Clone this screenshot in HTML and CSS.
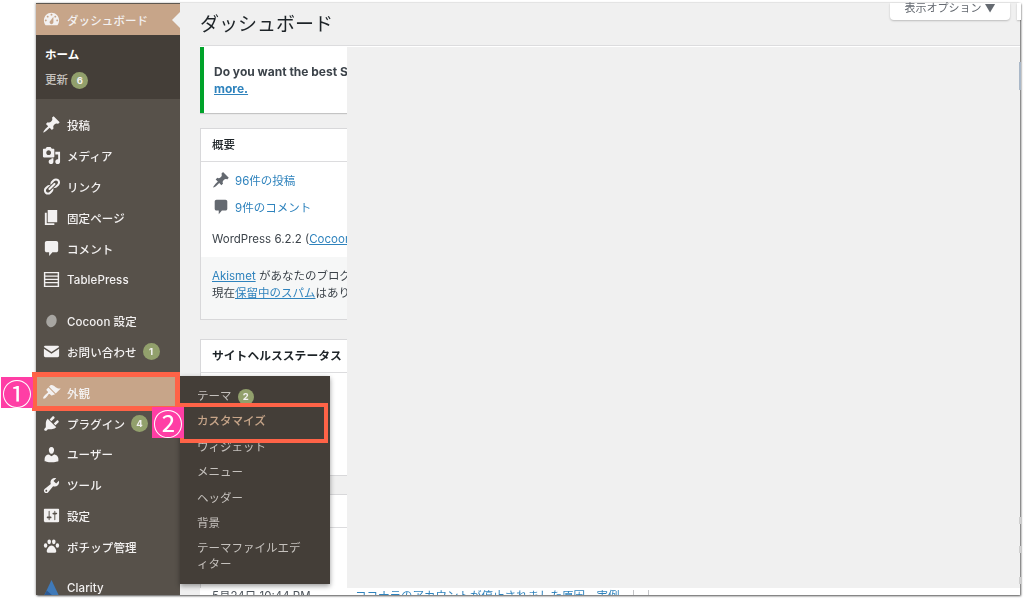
FILE: index.html
```html
<!DOCTYPE html>
<html lang="ja">
<head>
  <meta charset="UTF-8" />
  <title>ダッシュボード</title>
  <link rel="stylesheet" href="styles.css">
</head>
<body>
  <svg class="sprites" width="0" height="0">
    <symbol id="i-pin" viewBox="0 0 20 20"><path d="M10.44 3.02l1.82-1.82 6.36 6.35-1.83 1.82c-1.05-.68-2.48-.57-3.41.36l-.75.75c-.92.93-1.04 2.35-.35 3.41l-1.83 1.82-2.41-2.41-2.8 2.79c-.42.42-3.38 2.71-3.8 2.29s1.86-3.39 2.28-3.81l2.79-2.79L4.1 9.36l1.83-1.82c1.05.69 2.48.57 3.4-.36l.75-.75c.93-.92 1.05-2.35.36-3.41z"/></symbol>
    <symbol id="i-comment" viewBox="0 0 20 20"><path d="M5 2h10c1.1 0 2 .9 2 2v8c0 1.1-.9 2-2 2h-4l-3.5 4v-4H5c-1.1 0-2-.9-2-2V4c0-1.1.9-2 2-2z"/></symbol>
  </svg>

  <div class="frame">
    <nav class="sidebar">
      <div class="menu-item current top">
        <svg class="icon" viewBox="0 0 20 20"><path fill-rule="evenodd" d="M3.76 16h12.48c1.1-1.37 1.76-3.11 1.76-5 0-4.42-3.58-8-8-8s-8 3.58-8 8c0 1.89.66 3.63 1.76 5zM10 4c.55 0 1 .45 1 1s-.45 1-1 1-1-.45-1-1 .45-1 1-1zM6 6c.55 0 1 .45 1 1s-.45 1-1 1-1-.45-1-1 .45-1 1-1zm8 0c.55 0 1 .45 1 1s-.45 1-1 1-1-.45-1-1 .45-1 1-1zm-5.37 5.55L12 7v6c0 1.1-.9 2-2 2s-2-.9-2-2c0-.57.24-1.08.63-1.45zM4 10c.55 0 1 .45 1 1s-.45 1-1 1-1-.45-1-1 .45-1 1-1zm12 0c.55 0 1 .45 1 1s-.45 1-1 1-1-.45-1-1 .45-1 1-1z"/></svg>
        <span>ダッシュボード</span>
      </div>
      <div class="home-sub">
        <div class="home-link strong">ホーム</div>
        <div class="home-link">更新 <span class="badge">6</span></div>
      </div>

      <div class="menu-group">
        <div class="menu-item"><svg class="icon"><use href="#i-pin"/></svg><span>投稿</span></div>
        <div class="menu-item"><svg class="icon" viewBox="0 0 20 20"><path fill-rule="evenodd" d="M13 11V4c0-.55-.45-1-1-1h-1.67L9 1H5L3.67 3H2c-.55 0-1 .45-1 1v7c0 .55.45 1 1 1h10c.55 0 1-.45 1-1zM7 4.5c1.38 0 2.5 1.12 2.5 2.5S8.38 9.5 7 9.5 4.5 8.38 4.5 7 5.62 4.5 7 4.5zM14 6h5v10.5c0 1.38-1.12 2.5-2.5 2.5S14 17.88 14 16.5s1.12-2.5 2.5-2.5c.17 0 .34.02.5.05V9h-3V6zm-4 8.05V13h2v3.5c0 1.38-1.12 2.5-2.5 2.5S7 17.88 7 16.5 8.12 14 9.5 14c.17 0 .34.02.5.05z"/></svg><span>メディア</span></div>
        <div class="menu-item"><svg class="icon" viewBox="0 0 20 20"><path d="M17.74 2.76c1.68 1.69 1.68 4.41 0 6.1l-1.53 1.52c-1.12 1.12-2.7 1.47-4.14 1.09l2.62-2.61.76-.77.76-.76c.84-.84.84-2.2 0-3.04-.84-.85-2.2-.85-3.04 0l-.77.76-3.38 3.38c-.37-1.44-.02-3.02 1.1-4.14l1.52-1.53c1.69-1.68 4.42-1.68 6.1 0zM8.59 13.43l5.34-5.34c.42-.42.42-1.1 0-1.52-.44-.43-1.13-.39-1.53 0l-5.33 5.34c-.42.42-.42 1.1 0 1.52.44.43 1.13.39 1.52 0zm-.76 2.29l4.14-4.15c.38 1.44.03 3.02-1.09 4.14l-1.52 1.53c-1.69 1.68-4.41 1.68-6.1 0-1.68-1.68-1.68-4.42 0-6.1l1.53-1.52c1.12-1.12 2.7-1.47 4.14-1.1l-4.14 4.15c-.85.84-.85 2.2 0 3.05.84.84 2.2.84 3.04 0z"/></svg><span>リンク</span></div>
        <div class="menu-item"><svg class="icon" viewBox="0 0 20 20"><path d="M6 15V2h10v13H6zm-1 1h8v2H3V5h2v11z"/></svg><span>固定ページ</span></div>
        <div class="menu-item"><svg class="icon"><use href="#i-comment"/></svg><span>コメント</span></div>
        <div class="menu-item"><svg class="icon" viewBox="0 0 20 20"><path fill-rule="evenodd" d="M2 2h16v16H2zM3.5 3.5v2.2h13V3.5zM3.5 7v2.2h13V7zM3.5 10.5v2.2h13v-2.2zM3.5 14v2.5h13V14z"/></svg><span>TablePress</span></div>
      </div>

      <div class="menu-group">
        <div class="menu-item"><svg class="icon cocoon" viewBox="0 0 20 20"><ellipse cx="10" cy="10.5" rx="5.4" ry="6.6" transform="rotate(18 10 10.5)"/></svg><span>Cocoon 設定</span></div>
        <div class="menu-item"><svg class="icon" viewBox="0 0 20 20"><path d="M3.5 4h13c.8 0 1.5.7 1.5 1.2L10 10.4 2 5.2C2 4.700 2.700 4 3.500 4zM2 7.200l8 5.200 8-5.200v7.300c0 .8-.7 1.500-1.500 1.500h-13C2.700 16 2 15.300 2 14.500z"/></svg><span>お問い合わせ</span><span class="badge">1</span></div>
      </div>

      <div class="menu-group tight">
        <div class="menu-item current open"><svg class="icon" viewBox="0 0 20 20"><path d="M14.480 11.060L7.410 3.990l1.500-1.500c.5-.56 2.300-.47 3.510.32 1.210.8 1.430 1.280 2.910 2.100 1.180.64 2.450 1.260 4.450.85zm-.71.71L6.700 4.700 4.930 6.470c-.39.39-.39 1.020 0 1.410l1.060 1.060c.39.39.39 1.030 0 1.420-.6.6-6 4.500-4.500 6s4.900-3.900 5.500-4.500c.39-.39 1.030-.39 1.420 0l1.060 1.060c.39.39 1.020.39 1.410 0z"/></svg><span>外観</span></div>
        <div class="menu-item"><svg class="icon" viewBox="0 0 20 20"><path d="M13.110 4.360L9.870 7.600 8 5.730l3.240-3.240c.35-.34 1.050-.2 1.560.32.52.51.66 1.210.31 1.550zm-8 1.770l.91-1.120 9.010 9.010-1.190.84c-.71.71-2.630 1.160-3.820 1.160H6.140L4.900 17.260c-.59.59-1.540.59-2.120 0-.59-.58-.59-1.530 0-2.120l1.240-1.240v-3.880c0-1.130.4-3.190 1.090-3.890zm7.260 3.970l3.240-3.240c.34-.35 1.040-.21 1.550.31.52.51.66 1.210.31 1.550l-3.240 3.250z"/></svg><span>プラグイン</span><span class="badge">4</span></div>
        <div class="menu-item"><svg class="icon" viewBox="0 0 20 20"><path d="M10 9.250c-2.270 0-2.730-3.440-2.730-3.440C7 4.020 7.820 2 9.970 2c2.160 0 2.980 2.020 2.710 3.810 0 0-.41 3.440-2.680 3.440zm0 2.570L12.720 10c2.390 0 4.520 2.330 4.520 4.530v2.490s-3.650 1.130-7.240 1.130c-3.650 0-7.240-1.130-7.240-1.130v-2.490c0-2.250 1.940-4.480 4.470-4.480z"/></svg><span>ユーザー</span></div>
        <div class="menu-item"><svg class="icon" viewBox="0 0 20 20"><path fill-rule="evenodd" d="M16.680 9.770c-1.340 1.340-3.300 1.670-4.950.99l-5.410 6.520c-.99.99-2.590.99-3.580 0s-.99-2.590 0-3.570l6.520-5.420c-.68-1.650-.35-3.610.99-4.950 1.280-1.280 3.120-1.620 4.720-1.060l-2.890 2.890 2.820 2.820 2.860-2.870c.53 1.580.18 3.390-1.080 4.650zM3.810 16.210c.4.39 1.040.39 1.430 0 .4-.4.4-1.040 0-1.430-.39-.4-1.030-.4-1.430 0-.39.39-.39 1.030 0 1.430z"/></svg><span>ツール</span></div>
        <div class="menu-item"><svg class="icon" viewBox="0 0 20 20"><path fill-rule="evenodd" d="M18 16V4c0-.55-.45-1-1-1H3c-.55 0-1 .45-1 1v12c0 .55.45 1 1 1h14c.55 0 1-.45 1-1zM8 11h1c.55 0 1 .45 1 1s-.45 1-1 1H8v1.500c0 .28-.22.5-.5.5s-.5-.22-.5-.5V13H6c-.55 0-1-.45-1-1s.45-1 1-1h1V5.500c0-.28.22-.5.5-.5s.5.22.5.5V11zm5-2h-1c-.55 0-1-.45-1-1s.45-1 1-1h1V5.500c0-.28.22-.5.5-.5s.5.22.5.5V7h1c.55 0 1 .45 1 1s-.45 1-1 1h-1v5.500c0 .28-.22.5-.5.5s-.5-.22-.5-.5V9z"/></svg><span>設定</span></div>
        <div class="menu-item"><svg class="icon" viewBox="0 0 20 20"><ellipse cx="7.600" cy="5" rx="1.900" ry="2.500"/><ellipse cx="12.400" cy="5" rx="1.900" ry="2.500"/><ellipse cx="3.800" cy="9" rx="1.800" ry="2.300"/><ellipse cx="16.200" cy="9" rx="1.800" ry="2.300"/><path d="M10 9c2.500 0 5 3.600 5 6 0 2.400-3 1.500-5 1.500S5 17.400 5 15c0-2.400 2.500-6 5-6z"/></svg><span>ポチップ管理</span></div>
      </div>

      <div class="menu-group">
        <div class="menu-item"><svg class="icon clarity" viewBox="0 0 20 20"><path d="M10 1L19 20H1z" fill="#3f79b8"/><path d="M5 12l9 8H1z" fill="#2d5a94"/></svg><span>Clarity</span></div>
      </div>
    </nav>

    <main class="main">
      <div class="page-head">
        <h1>ダッシュボード</h1>
        <div class="screen-tabs">
          <div class="screen-btn">表示オプション ▼</div>
          <div class="screen-btn next"></div>
        </div>
      </div>

      <div class="notice-line">
        <div class="col">
          <div class="notice">
            <p>Do you want the best SEO plugin</p>
            <a href="#">more.</a>
          </div>

          <section class="card">
            <h2>概要</h2>
            <div class="glance">
              <div class="glance-row"><svg class="glance-icon"><use href="#i-pin"/></svg><a href="#" class="plain">96件の投稿</a></div>
              <div class="glance-row"><svg class="glance-icon"><use href="#i-comment"/></svg><a href="#" class="plain">9件のコメント</a></div>
              <p class="version">WordPress 6.2.2 (<a href="#">Cocoon</a>)</p>
            </div>
            <div class="card-foot">
              <p><a href="#">Akismet</a> があなたのブログを</p>
              <p>現在<a href="#">保留中のスパム</a>はありません</p>
            </div>
          </section>

          <section class="card health">
            <h2>サイトヘルスステータス</h2>
          </section>

          <section class="card activity">
            <h2>&nbsp;</h2>
          </section>
        </div>
      </div>

      <div class="table-strip">
        <span class="date">5月24日 10:44 PM</span>
        <a href="#" class="plain row-link">ココナラのアカウントが停止されました原因、実例</a>
        <span class="cell-edge"></span>
        <span class="cell-edge"></span>
      </div>
    </main>

    <div class="flyout">
      <div class="fly-item">テーマ <span class="badge small">2</span></div>
      <div class="fly-item active">カスタマイズ</div>
      <div class="fly-item">ウィジェット</div>
      <div class="fly-item">メニュー</div>
      <div class="fly-item">ヘッダー</div>
      <div class="fly-item">背景</div>
      <div class="fly-item">テーマファイルエディター</div>
    </div>

    <div class="mark box-one"></div>
    <div class="mark box-two"></div>
    <div class="num num-one">①</div>
    <div class="num num-two">②</div>

    <div class="thumb"></div>
    <div class="tick tick-a"></div>
    <div class="tick tick-b"></div>
    <div class="tick tick-c"></div>
  </div>
</body>
</html>
```

FILE: styles.css
```css
:root {
  --menu-bg: #57514a;
  --sub-bg: #443e38;
  --current: #c7a589;
  --menu-text: #f3f1f1;
  --sub-text: #c5c1bd;
  --badge: #92a06c;
  --link: #2f83bd;
  --page-bg: #f0f0f0;
  --line: #dcdcde;
  --mark: #ff6347;
  --pink: #ff3ea5;
}

* {
  box-sizing: border-box;
}

html, body {
  height: 100%;
}

body {
  margin: 0;
  background-color: #fff;
  overflow: hidden;
  font-family: Inter, "Noto Sans CJK JP", sans-serif;
  font-size: 11.5px;
  color: #3c434a;
}

.sprites {
  position: absolute;
}

a {
  color: var(--link);
}

a.plain {
  text-decoration: none;
}

.frame {
  position: relative;
  display: flex;
  width: 984px;
  height: 592px;
  margin: 3px 0 0 36px;
  background-color: var(--page-bg);
  box-shadow: 1px 1px 2px rgba(0, 0, 0, 0.65), -1px 0 2px rgba(0, 0, 0, 0.2);
  filter: blur(0.45px);
}

/* sidebar */
.sidebar {
  flex: none;
  width: 144px;
  background-color: var(--menu-bg);
  color: var(--menu-text);
  font-weight: 500;
  letter-spacing: 0.1px;
  overflow: hidden;
}

.menu-group {
  margin-top: 10px;
}

.menu-item {
  position: relative;
  display: flex;
  align-items: center;
  gap: 6px;
  height: 31px;
  padding-left: 6px;
  white-space: nowrap;
}

.tight .menu-item {
  height: 30.8px;
}

.menu-item.top {
  height: 32px;
  border-top: 1px solid #5e5850;
}

.menu-item.current {
  background-color: var(--current);
}

.menu-item.top::after,
.menu-item.open::after {
  content: "";
  position: absolute;
  right: 0;
  top: 50%;
  margin-top: -8px;
  border: 8px solid transparent;
  border-right-color: var(--page-bg);
  border-left-width: 0;
}

.menu-item.open::after {
  margin-top: -4px;
  border-width: 4px;
  border-left-width: 0;
  border-right-color: var(--sub-bg);
}

.icon {
  flex: none;
  width: 19px;
  height: 19px;
  fill: var(--menu-text);
}

.icon.cocoon {
  fill: #a8a6a2;
}

.icon.clarity {
  margin-top: 2px;
}

.badge {
  display: inline-block;
  width: 17px;
  height: 17px;
  border-radius: 50%;
  background-color: var(--badge);
  color: #f3f1f1;
  font-size: 9.5px;
  font-weight: 700;
  line-height: 17px;
  text-align: center;
}

.badge.small {
  width: 16px;
  height: 16px;
  margin-left: 3px;
  line-height: 16px;
}

.home-sub {
  height: 64.4px;
  padding: 8px 0 0 9px;
  background-color: var(--sub-bg);
  color: var(--sub-text);
}

.home-link {
  height: 25px;
  line-height: 24px;
}

.home-link.strong {
  color: #fff;
  font-weight: 700;
}

/* main column */
.main {
  flex: 1;
  min-width: 0;
  display: flex;
  flex-direction: column;
  padding-left: 20px;
}

.page-head {
  flex: none;
  display: flex;
  justify-content: space-between;
  height: 42px;
}

h1 {
  margin: 7px 0 0;
  font-size: 19px;
  font-weight: 400;
  line-height: 30px;
  color: #1d2327;
}

.screen-tabs {
  display: flex;
  gap: 7px;
  margin-right: -1px;
}

.screen-btn {
  width: 120px;
  height: 17px;
  background-color: #fff;
  border-radius: 0 0 4px 4px;
  box-shadow: 0 1px 2px rgba(0, 0, 0, 0.22);
  color: #646970;
  font-size: 11px;
  line-height: 10px;
  text-align: center;
}

.screen-btn.next {
  width: 4px;
  border-radius: 0;
}

.notice-line {
  flex: 1;
  min-height: 0;
  border-top: 1px solid var(--line);
  box-shadow: inset 0 1px 0 #fff;
}

.col {
  width: 147px;
  height: 100%;
  padding-top: 1px;
  overflow: hidden;
}

.notice {
  width: 400px;
  height: 66px;
  padding: 16px 0 0 10px;
  background-color: #fff;
  border-left: 4px solid #00a32a;
  box-shadow: 0 1px 1px rgba(0, 0, 0, 0.18);
  font-size: 12px;
  font-weight: 700;
  line-height: 17px;
  white-space: nowrap;
}

.notice p {
  margin: 0;
}

.card {
  width: 400px;
  margin-top: 15px;
  background-color: #fff;
  border: 1px solid #d8d8da;
  white-space: nowrap;
}

.card h2 {
  height: 33px;
  margin: 0;
  padding: 0 11px;
  border-bottom: 1px solid var(--line);
  font-size: 11.5px;
  font-weight: 500;
  line-height: 32px;
  color: #1d2327;
}

.glance {
  height: 95px;
  padding: 4px 0 0 11px;
}

.glance-row {
  display: flex;
  align-items: center;
  gap: 5px;
  height: 27px;
}

.glance-icon {
  flex: none;
  width: 18px;
  height: 18px;
  fill: #646970;
}

.version {
  margin: 9px 0 0;
  line-height: 20px;
}

.card-foot {
  height: 62px;
  padding: 11px 11px 0;
  background-color: #f6f7f7;
  line-height: 17px;
}

.card-foot p {
  margin: 0;
}

.card.health {
  height: 137px;
  margin-top: 19px;
}

.card.health h2 {
  font-size: 11.8px;
  font-weight: 700;
}

.card.activity {
  height: 120px;
  margin-top: 18px;
}

.table-strip {
  flex: none;
  display: flex;
  height: 7px;
  padding-top: 2px;
  overflow: hidden;
  background-color: #fff;
  font-size: 11.5px;
  line-height: 13px;
  white-space: nowrap;
}

.date {
  width: 155px;
  padding-left: 12px;
  color: #50575e;
}

.row-link {
  width: 278px;
}

.cell-edge {
  width: 15px;
  border-left: 1px solid #c3c4c7;
}

/* flyout and overlays */
.flyout {
  position: absolute;
  left: 144px;
  top: 373px;
  width: 150px;
  height: 208px;
  padding: 7px 20px 0 17px;
  background-color: var(--sub-bg);
  box-shadow: 0 2px 5px rgba(0, 0, 0, 0.4);
  color: var(--sub-text);
}

.fly-item {
  min-height: 25.4px;
  line-height: 16px;
  padding-top: 5px;
}

.fly-item.active {
  color: var(--current);
  font-weight: 500;
}

.mark {
  position: absolute;
  border: 5px solid var(--mark);
}

.box-one {
  left: -4px;
  top: 369px;
  width: 148px;
  height: 39px;
}

.box-two {
  left: 144px;
  top: 400px;
  width: 148px;
  height: 40px;
  border-width: 4px;
}

.num {
  position: absolute;
  width: 32px;
  height: 31px;
  background-color: var(--pink);
  color: #fff;
  font-family: "Noto Sans CJK JP", sans-serif;
  font-size: 30px;
  line-height: 30px;
  text-align: center;
}

.num-one {
  left: -35px;
  top: 374px;
}

.num-two {
  left: 116px;
  top: 404px;
}

.thumb, .tick {
  position: absolute;
  right: -1px;
  width: 2px;
}

.thumb {
  top: 59px;
  height: 28px;
  background-color: #aab8c8;
}

.tick {
  height: 7px;
  background-color: #cfcfcf;
}

.tick-a { top: 514px; }
.tick-b { top: 543px; }
.tick-c { top: 574px; }
```
